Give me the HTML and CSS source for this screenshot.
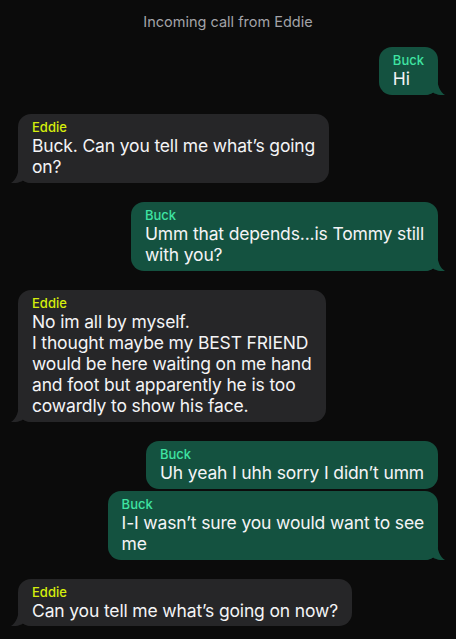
FILE: index.html
```html
<!DOCTYPE html>
<html lang="en">
<head>
  <meta charset="UTF-8">
  <title>Incoming call from Eddie</title>
  <link rel="stylesheet" href="styles.css">
</head>
<body>
<div class="notice">Incoming call from Eddie</div>

<div class="chat">
  <div class="group">
    <div class="bubble me tail">
      <div class="name">Buck</div>
      <div class="text">Hi</div>
      <svg class="tip" viewBox="0 0 20 20"><path d="M0 0H12C12 10 15 17 20 20C15 20.5 11 19.5 8 17.5C6 19 3 20 0 20Z"/></svg>
    </div>
  </div>

  <div class="group">
    <div class="bubble them tail">
      <div class="name">Eddie</div>
      <div class="text">Buck. Can you tell me what’s going<br>on?</div>
      <svg class="tip" viewBox="0 0 20 20"><path d="M0 0H12C12 10 15 17 20 20C15 20.5 11 19.5 8 17.5C6 19 3 20 0 20Z"/></svg>
    </div>
  </div>

  <div class="group">
    <div class="bubble me tail">
      <div class="name">Buck</div>
      <div class="text">Umm that depends...is Tommy still<br>with you?</div>
      <svg class="tip" viewBox="0 0 20 20"><path d="M0 0H12C12 10 15 17 20 20C15 20.5 11 19.5 8 17.5C6 19 3 20 0 20Z"/></svg>
    </div>
  </div>

  <div class="group">
    <div class="bubble them tail">
      <div class="name">Eddie</div>
      <div class="text">No im all by myself.<br>I thought maybe my BEST FRIEND<br>would be here waiting on me hand<br>and foot but apparently he is too<br>cowardly to show his face.</div>
      <svg class="tip" viewBox="0 0 20 20"><path d="M0 0H12C12 10 15 17 20 20C15 20.5 11 19.5 8 17.5C6 19 3 20 0 20Z"/></svg>
    </div>
  </div>

  <div class="group">
    <div class="bubble me">
      <div class="name">Buck</div>
      <div class="text">Uh yeah I uhh sorry I didn’t umm</div>
    </div>
    <div class="bubble me tail">
      <div class="name">Buck</div>
      <div class="text">I-I wasn’t sure you would want to see<br>me</div>
      <svg class="tip" viewBox="0 0 20 20"><path d="M0 0H12C12 10 15 17 20 20C15 20.5 11 19.5 8 17.5C6 19 3 20 0 20Z"/></svg>
    </div>
  </div>

  <div class="group">
    <div class="bubble them tail">
      <div class="name">Eddie</div>
      <div class="text">Can you tell me what’s going on now?</div>
      <svg class="tip" viewBox="0 0 20 20"><path d="M0 0H12C12 10 15 17 20 20C15 20.5 11 19.5 8 17.5C6 19 3 20 0 20Z"/></svg>
    </div>
  </div>
</div>
</body>
</html>
```

FILE: styles.css
```css
html, body {
  margin: 0;
  padding: 0;
}

body {
  background: #0b0b0b;
  color: #f4f4f6;
  font-family: Inter, "Noto Sans", sans-serif;
}

.notice {
  text-align: center;
  color: #a3a3a8;
  font-size: 14.5px;
  line-height: 18px;
  padding-top: 13px;
}

.chat {
  display: flex;
  flex-direction: column;
  gap: 19px;
  padding: 16px 18px 10px 18px;
}

.group {
  display: flex;
  flex-direction: column;
  gap: 2px;
}

.bubble {
  position: relative;
  padding: 5px 14px 5.5px 14px;
  border-radius: 13px;
  white-space: nowrap;
}

.bubble.me {
  align-self: flex-end;
  background: #145240;
  fill: #145240;
}

.bubble.them {
  align-self: flex-start;
  background: #262628;
  fill: #262628;
}

.name {
  font-size: 13px;
  line-height: 16px;
  font-weight: 500;
}

.me .name {
  color: #3fe3a2;
}

.them .name {
  color: #d6ee0c;
}

.text {
  font-size: 17.5px;
  line-height: 21.2px;
  letter-spacing: -0.15px;
}

.tip {
  position: absolute;
  bottom: 0;
  width: 20px;
  height: 20px;
  display: block;
}

.me .tip {
  right: -7px;
}

.them .tip {
  left: -7px;
  transform: scaleX(-1);
}
```
